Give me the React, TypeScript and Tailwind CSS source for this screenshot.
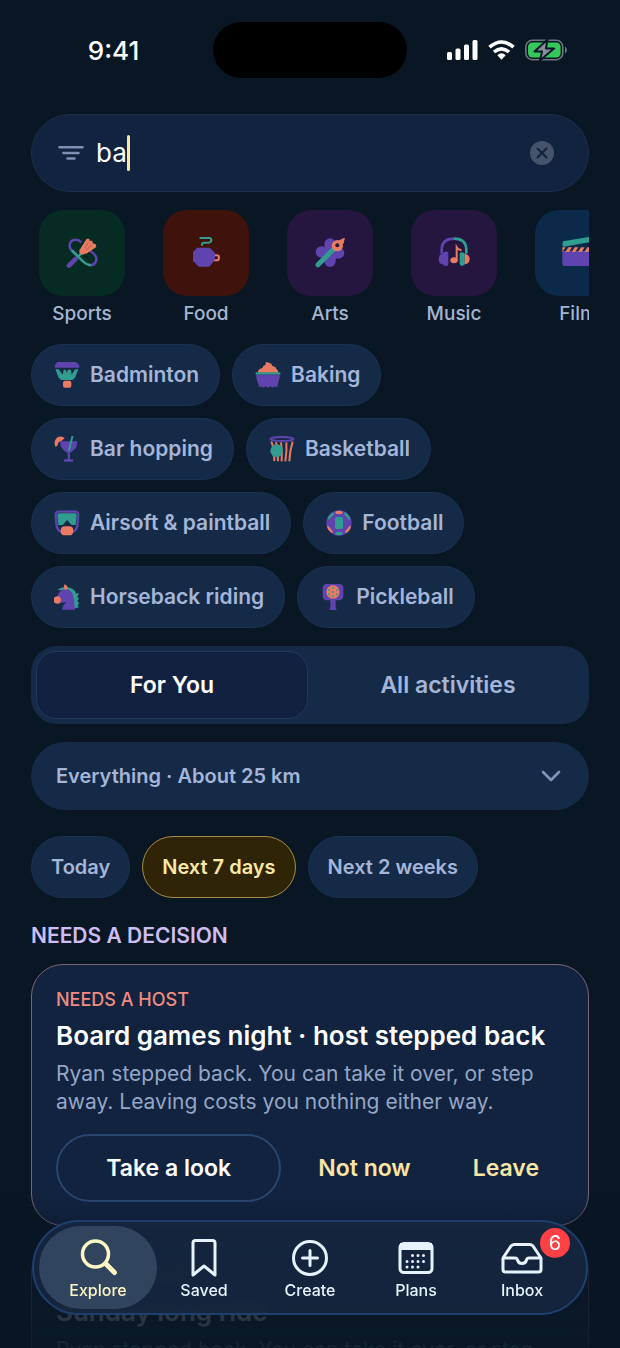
import { useState } from 'react';
import type { ReactNode } from 'react';

const PURPLE = '#5f43ae';
const TEAL = '#309d8f';
const CORAL = '#ea7b63';

const SportsIcon = () => (
  <svg viewBox="0 0 96 96" className="size-8" fill="none" aria-hidden="true">
    <path d="M35 56C22 46 9 36 11 24 14 6 34 3 46 16" stroke={PURPLE} strokeWidth="7.500" />
    <path d="M72 42C87 50 94 62 90 72 87 81 79 86 68 84" stroke={PURPLE} strokeWidth="7.500" />
    <path d="M20 42 50 72Q60 83 72 84" stroke={TEAL} strokeWidth="7.500" strokeLinecap="round" />
    <path d="M48 47 30 66" stroke={TEAL} strokeWidth="7" />
    <path d="M29 66 9 86" stroke={PURPLE} strokeWidth="14" strokeLinecap="round" />
    <path d="M44 34 62 5 70 5 71 11 79 11 80 18 89 22 91 30 60 51Z" fill={CORAL} />
    <circle cx="50" cy="43" r="10" fill={CORAL} />
    <path d="M56 35 68 14M60 39 79 24" stroke="#9d5445" strokeWidth="2" />
  </svg>
);

const FoodIcon = () => (
  <svg viewBox="0 0 96 96" className="size-8" fill="none" aria-hidden="true">
    <path d="M31 3H57Q64 3 64 10 64 17 55 17H42Q36 17 36 24" stroke={TEAL} strokeWidth="6" strokeLinecap="round" />
    <path d="M72 55H80Q87 55 87 62 87 70 79 70H70" stroke={CORAL} strokeWidth="6" />
    <path d="M23 35H58L72 49V67L57 86H27L12 71V46Z" fill={PURPLE} stroke={PURPLE} strokeWidth="6" strokeLinejoin="round" />
  </svg>
);

const ArtsIcon = () => (
  <svg viewBox="0 0 96 96" className="size-8" fill="none" aria-hidden="true">
    <g fill={PURPLE}>
      <circle cx="48" cy="21" r="17" />
      <circle cx="22" cy="45" r="17" />
      <circle cx="74" cy="48" r="17" />
      <circle cx="48" cy="73" r="17" />
      <circle cx="48" cy="48" r="26" />
    </g>
    <path d="M60 35 12 83" stroke={TEAL} strokeWidth="15" strokeLinecap="round" />
    <path d="M76 11 91 4 87 20Z" fill={CORAL} stroke={CORAL} strokeWidth="3" strokeLinejoin="round" />
    <circle cx="70" cy="26" r="17" fill={CORAL} />
    <circle cx="70" cy="25" r="6" fill="#24163f" />
  </svg>
);

const MusicIcon = () => (
  <svg viewBox="0 0 96 96" className="size-8" fill="none" aria-hidden="true">
    <path d="M11 50V40Q11 5 48 5" stroke={PURPLE} strokeWidth="8" />
    <path d="M48 5Q85 5 85 40V50" stroke={TEAL} strokeWidth="8" />
    <path d="M17 46Q31 40 31 49V80Q31 90 20 86L13 82Q2 80 2 66 2 52 14 50Z" fill={PURPLE} />
    <path d="M80 50Q95 53 95 66 95 80 79 82Z" fill={CORAL} />
    <path d="M65 52Q65 44 73 46L80 49V83L73 86Q65 87 65 80Z" fill={TEAL} />
    <ellipse cx="48" cy="70" rx="11" ry="9" fill={CORAL} />
    <path d="M56 70V31Q60 38 68 39" stroke={CORAL} strokeWidth="6" strokeLinecap="round" />
  </svg>
);

const FilmIcon = () => (
  <svg viewBox="0 0 96 96" className="size-8" aria-hidden="true">
    <path d="M3 13 86 -1Q93 -1 93 6V14L6 29Q1 29 1 23Z" fill={TEAL} />
    <path d="M1 42H95V81Q95 87 88 87H8Q1 87 1 80Z" fill={PURPLE} />
    <path
      d="M1 31H11L1 44ZM19 31H30L21 45H10ZM38 31H49L40 45H29ZM57 31H68L59 45H48ZM76 31H87L78 45H67Z"
      fill={CORAL}
    />
  </svg>
);

const BadmintonIcon = () => (
  <svg viewBox="0 0 78 78" className="size-[26px]" fill="none" aria-hidden="true">
    <path d="M10 0H66L76 10V17H3V10Z" fill={PURPLE} />
    <path d="M4 22H14L26 38 29 23H35L38 32 42 23H50L53 38 63 22H73L63 47 55 54H22L14 47Z" fill={TEAL} />
    <rect x="27" y="56" width="25" height="21" rx="6" fill={CORAL} />
  </svg>
);

const BakingIcon = () => (
  <svg viewBox="0 0 78 78" className="size-[26px]" fill="none" aria-hidden="true">
    <path d="M9 32Q8 21 22 18 23 11 32 8 30 3 34 0 52 3 52 12 64 15 64 21 70 24 70 32Z" fill={CORAL} />
    <path d="M2 31H76V38H2Z" fill={TEAL} />
    <path
      d="M4 40 8 37 14 40 20 37 26 40 32 37 38 40 45 37 52 40 58 37 65 40 72 37 75 43 66 76 59 73 53 77 46 73 39 77 32 73 25 77 19 73 13 76 4 48Z"
      fill={PURPLE}
    />
  </svg>
);

const CocktailIcon = () => (
  <svg viewBox="0 0 78 78" className="size-[26px]" fill="none" aria-hidden="true">
    <path d="M3 29Q-2 13 12 3 24-2 32 7L22 15 14 19Q12 28 6 33Z" fill={CORAL} />
    <path d="M18 16H70Q72 37 48 51V70H57V77H30V70H41V51Q18 41 18 16Z" fill={PURPLE} />
    <path d="M45 42 55 2" stroke={TEAL} strokeWidth="6" strokeLinecap="round" />
  </svg>
);

const BasketballIcon = () => (
  <svg viewBox="0 0 78 78" className="size-[26px]" fill="none" aria-hidden="true">
    <path
      d="M7 17Q17 40 16 75M21 19Q28 45 27 76M36 19Q40 45 38 76M52 19Q54 45 49 76M71 17Q62 45 61 76"
      stroke={CORAL}
      strokeWidth="6"
    />
    <ellipse cx="39" cy="9" rx="35" ry="6" stroke={PURPLE} strokeWidth="6" />
    <circle cx="23" cy="44" r="19" fill={TEAL} />
  </svg>
);

const AirsoftIcon = () => (
  <svg viewBox="0 0 78 78" className="size-[26px]" fill="none" aria-hidden="true">
    <path
      d="M15 5H63Q74 5 73 17L70 48Q67 62 54 67H24Q11 62 8 48L5 17Q4 5 15 5Z"
      stroke={PURPLE}
      strokeWidth="7"
    />
    <path d="M16 10H62Q69 10 68 18L65 45H53L39 30 26 45H13L10 18Q9 10 16 10Z" fill={TEAL} />
    <path d="M30 49H48Q58 50 58 62 57 76 46 76H33Q20 76 20 62 20 50 30 49Z" fill={CORAL} />
  </svg>
);

const FootballIcon = () => (
  <svg viewBox="0 0 78 78" className="size-[26px]" fill="none" aria-hidden="true">
    <circle cx="39" cy="39" r="38" fill={PURPLE} />
    <path d="M5 27Q9 13 22 7L24 13 9 29ZM73 27Q69 13 56 7L54 13 69 29Z" fill={TEAL} />
    <path d="M27 72Q39 80 51 72L47 66H31Z" fill={TEAL} />
    <path d="M27 6Q39-1 51 6L47 12H31Z" fill={CORAL} />
    <path d="M3 47 8 49 20 64 20 70Q4 63 3 47ZM75 47 70 49 58 64 58 70Q74 63 75 47Z" fill={CORAL} />
    <rect x="27" y="21" width="24" height="36" rx="5" fill={TEAL} />
  </svg>
);

const HorseIcon = () => (
  <svg viewBox="0 0 78 78" className="size-[26px]" fill="none" aria-hidden="true">
    <path
      d="M10 17 22 11 32 9Q61 9 66 29L75 27 70 38 75 45 70 50 76 59 71 63 75 70 58 74 40 22Z"
      fill={TEAL}
    />
    <path d="M9 37Q16 17 36 14 58 19 60 49L63 77H24Q25 65 36 55L17 57Q7 51 9 37Z" fill={PURPLE} />
    <path d="M31 1Q43 5 41 16L32 18Q28 10 31 1Z" fill={CORAL} />
    <circle cx="10" cy="48" r="11" fill={CORAL} />
  </svg>
);

const PickleballIcon = () => (
  <svg viewBox="0 0 78 78" className="size-[26px]" fill="none" aria-hidden="true">
    <path
      d="M20 0H58Q70 1 70 12V36Q69 48 56 49H47V70L50 78H28L31 70V49H20Q8 48 8 36V12Q8 1 20 0Z"
      fill={PURPLE}
    />
    <circle cx="39" cy="24" r="20" fill={CORAL} />
    <g fill={TEAL}>
      <circle cx="39" cy="12" r="3" />
      <circle cx="27" cy="18" r="3" />
      <circle cx="51" cy="18" r="3" />
      <circle cx="39" cy="24" r="3" />
      <circle cx="27" cy="31" r="3" />
      <circle cx="51" cy="31" r="3" />
      <circle cx="39" cy="37" r="3" />
    </g>
  </svg>
);

const categories = [
  { name: 'Sports', color: 'bg-[#062b23]', icon: <SportsIcon /> },
  { name: 'Food', color: 'bg-[#3f130c]', icon: <FoodIcon /> },
  { name: 'Arts', color: 'bg-[#24163f]', icon: <ArtsIcon /> },
  { name: 'Music', color: 'bg-[#24163f]', icon: <MusicIcon /> },
  { name: 'Film', color: 'bg-[#0b2a4a]', icon: <FilmIcon /> },
];

const suggestions = [
  { name: 'Badminton', icon: <BadmintonIcon /> },
  { name: 'Baking', icon: <BakingIcon /> },
  { name: 'Bar hopping', icon: <CocktailIcon /> },
  { name: 'Basketball', icon: <BasketballIcon /> },
  { name: 'Airsoft & paintball', icon: <AirsoftIcon /> },
  { name: 'Football', icon: <FootballIcon /> },
  { name: 'Horseback riding', icon: <HorseIcon /> },
  { name: 'Pickleball', icon: <PickleballIcon /> },
];

const StatusBar = () => (
  <div className="flex h-14 shrink-0 items-center">
    <div className="flex-1 pl-3.5 text-center text-[26px] font-medium text-white">9:41</div>
    <div className="h-14 w-[194px] rounded-full bg-black" />
    <div className="flex flex-1 items-center justify-center gap-2.5 pr-3.5">
      <svg viewBox="0 0 31 20" className="h-5 w-[31px]" fill="white" aria-hidden="true">
        <rect x="0" y="12" width="5" height="8" rx="1.5" />
        <rect x="8.5" y="8.500" width="5" height="11.5" rx="1.5" />
        <rect x="17" y="4.500" width="5" height="15.5" rx="1.5" />
        <rect x="25.500" y="0" width="5" height="20" rx="1.5" />
      </svg>
      <svg viewBox="0 0 27 20" className="h-5 w-[27px]" fill="none" stroke="white" strokeWidth="3.6" aria-hidden="true">
        <path d="M1.500 7.200Q13.500-3.200 25.500 7.200" />
        <path d="M6 12Q13.500 5.600 21 12" />
        <path d="M9.300 15.200Q13.500 11.500 17.700 15.200L13.500 19.800Z" fill="white" stroke="none" />
      </svg>
      <svg viewBox="0 0 42 22" className="h-[22px] w-[42px]" fill="none" aria-hidden="true">
        <rect x="0.800" y="1.300" width="37" height="19.400" rx="6.500" stroke="#6c747d" strokeWidth="1.600" />
        <path d="M40 7.500Q42 8.500 42 11 42 13.500 40 14.500Z" fill="#6c747d" />
        <rect x="3" y="3.500" width="32.600" height="15" rx="4.500" fill="#34c759" />
        <path
          d="M22.500 0.500 9.500 12.500H17L15 21.500 29 9.500H21Z"
          fill="#858f98"
          stroke="#0a1726"
          strokeWidth="2"
          strokeLinejoin="round"
        />
      </svg>
    </div>
  </div>
);

const SearchBar = () => {
  const [query, setQuery] = useState('ba');

  return (
    <div className="mt-9 flex h-[78px] shrink-0 items-center rounded-full border border-[#1b2e4c] bg-[#12233f] px-[26px]">
      <svg viewBox="0 0 26 16" className="h-4 w-[26px]" stroke="#7c90b4" strokeWidth="2.600" strokeLinecap="round" aria-hidden="true">
        <path d="M1.500 2.300H24.500M5.500 8H20.500M9.500 13.500H16.500" />
      </svg>
      <input
        aria-label="Search activities"
        value={query}
        onChange={(e) => setQuery(e.target.value)}
        className="ml-3 field-sizing-content text-[26px] leading-9 text-white caret-transparent outline-none"
      />
      <span className="h-9 w-[3px] rounded-full bg-[#fbe6a2]" />
      <button aria-label="Clear search" onClick={() => setQuery('')} className="mr-2 ml-auto">
        <svg viewBox="0 0 24 24" className="size-6" aria-hidden="true">
          <circle cx="12" cy="12" r="12" fill="#45536b" />
          <path d="m7.500 7.500 9 9m0-9-9 9" stroke="#12233f" strokeWidth="2" strokeLinecap="round" />
        </svg>
      </button>
    </div>
  );
};

interface DecisionCardProps {
  title: string;
}
const DecisionCard = ({ title }: DecisionCardProps) => (
  <article className="shrink-0 rounded-[32px] border border-[#7d6376] bg-[#11233f] px-6 py-[23px]">
    <p className="text-lg leading-6 font-medium text-[#f08c80]">NEEDS A HOST</p>
    <h3 className="mt-1.5 text-[26px] leading-9 font-semibold whitespace-nowrap text-white">{title}</h3>
    <p className="mt-1.5 text-[21px] leading-7 text-[#95a6c6]">
      Ryan stepped back. You can take it over, or step away. Leaving costs you nothing either way.
    </p>
    <div className="mt-[18px] flex h-[68px] gap-3 text-[23px] font-semibold">
      <button className="flex-1 rounded-full border-2 border-[#294671] text-white">Take a look</button>
      <button className="px-[25px] text-[#f8e5a4]">Not now</button>
      <button className="px-[25px] text-[#f8e5a4]">Leave</button>
    </div>
  </article>
);

interface NavItemProps {
  label: string;
  active?: boolean;
  badge?: number;
  children: ReactNode;
}
const NavItem = ({ label, active, badge, children }: NavItemProps) => (
  <a
    href="#"
    aria-current={active ? 'page' : undefined}
    className={
      'relative -mx-1.5 flex flex-col items-center rounded-full pt-3 text-base leading-6 font-medium' +
      (active ? ' bg-[#3a4e68cc] text-[#fdf5c4]' : ' text-[#e6f3ff]')
    }
  >
    <svg viewBox="0 0 42 40" className="h-10 w-[42px]" fill="none" stroke="currentColor" strokeWidth="3" aria-hidden="true">
      {children}
    </svg>
    {label}
    {badge !== undefined && (
      <span className="absolute top-0.5 right-[11px] flex size-[30px] items-center justify-center rounded-full bg-[#ff4145] text-xl font-normal text-white">
        {badge}
      </span>
    )}
  </a>
);

const BottomNav = () => (
  <nav className="fixed inset-x-8 bottom-[33px] grid h-[95px] grid-cols-5 rounded-full border-2 border-[#1e406f] bg-[#15273fd9] px-[11px] py-1 backdrop-blur-xs">
    <NavItem label="Explore" active>
      <circle cx="18.500" cy="16" r="13" strokeWidth="3.500" />
      <path d="m29 26 8.500 8.500" strokeWidth="5" strokeLinecap="round" />
    </NavItem>
    <NavItem label="Saved">
      <path d="M10 5Q10 2.500 12.500 2.500H29.500Q32 2.500 32 5V37L21 28 10 37Z" strokeLinejoin="round" />
    </NavItem>
    <NavItem label="Create">
      <circle cx="21" cy="20" r="16.500" />
      <path d="M21 12.500V27.500M13.500 20H28.500" strokeLinecap="round" />
    </NavItem>
    <NavItem label="Plans">
      <rect x="5" y="5.500" width="32" height="29" rx="4" />
      <path d="M5 5H37V12H5Z" fill="currentColor" stroke="none" />
      <path
        d="M17.500 17.500H34M12 23.500H34M12 29H28.500"
        strokeDasharray="0 5.500"
        strokeLinecap="round"
      />
    </NavItem>
    <NavItem label="Inbox" badge={6}>
      <path
        d="M2 20 10 8Q11.500 6.500 13.500 6.500H28.500Q30.500 6.500 32 8L40 20V31.500Q40 34 37.500 34H4.500Q2 34 2 31.500V20H14Q16 20 16.500 22 17.500 25.500 21 25.500 24.500 25.500 25.500 22 26 20 28 20H40"
        strokeLinejoin="round"
      />
    </NavItem>
  </nav>
);

const App = () => {
  const [tab, setTab] = useState('For You');
  const [range, setRange] = useState('Next 7 days');

  return (
    <div className="flex h-screen flex-col overflow-hidden bg-[#091624] pt-[22px] font-['Inter','Liberation_Sans',sans-serif]">
      <StatusBar />

      <main className="flex min-h-0 flex-1 flex-col overflow-hidden px-[31px]">
        <SearchBar />

        <div className="mt-[18px] flex shrink-0 gap-[22px] overflow-hidden">
          {categories.map(({ name, color, icon }) => (
            <button
              key={name}
              className="flex w-[102px] shrink-0 flex-col items-center gap-1 text-[19px] leading-7 font-medium text-[#a4b5d2]"
            >
              <span className={'flex size-[86px] items-center justify-center rounded-3xl ' + color}>{icon}</span>
              {name}
            </button>
          ))}
        </div>

        <div className="mt-4 flex shrink-0 flex-wrap gap-3">
          {suggestions.map(({ name, icon }) => (
            <button
              key={name}
              className="flex h-[62px] items-center gap-2.5 rounded-full border border-[#193150] bg-[#152a47] pr-5 pl-[22px] text-[21px] font-semibold text-[#a4b5d8]"
            >
              {icon}
              {name}
            </button>
          ))}
        </div>

        <div className="mt-[18px] grid h-[78px] shrink-0 grid-cols-2 gap-1 rounded-[26px] bg-[#152a47] p-[5px] text-[23px] font-semibold">
          {['For You', 'All activities'].map((name) => (
            <button
              key={name}
              aria-pressed={tab === name}
              onClick={() => setTab(name)}
              className={
                'rounded-[20px] border' +
                (tab === name ? ' border-[#1e3b5e] bg-[#11213f] text-white' : ' border-transparent text-[#a4b5d8]')
              }
            >
              {name}
            </button>
          ))}
        </div>

        <div className="mt-[18px] grid shrink-0 items-center">
          <select
            aria-label="Activity and distance"
            className="col-start-1 row-start-1 h-[68px] appearance-none rounded-full bg-[#152a47] px-[25px] text-xl font-semibold text-[#a4b5d8]"
          >
            <option>Everything · About 25 km</option>
          </select>
          <svg
            viewBox="0 0 20 12"
            className="pointer-events-none col-start-1 row-start-1 mr-7 h-3 w-5 justify-self-end"
            fill="none"
            stroke="#8195ba"
            strokeWidth="2.600"
            strokeLinecap="round"
            strokeLinejoin="round"
            aria-hidden="true"
          >
            <path d="m2 2 8 8 8-8" />
          </svg>
        </div>

        <div className="mt-[26px] flex shrink-0 gap-3">
          {['Today', 'Next 7 days', 'Next 2 weeks'].map((name) => (
            <button
              key={name}
              aria-pressed={range === name}
              onClick={() => setRange(name)}
              className={
                'h-[62px] rounded-full border px-[19px] text-xl font-semibold' +
                (range === name
                  ? ' border-[#a88c43] bg-[#2f2405] text-[#fbe8a6]'
                  : ' border-[#193150] bg-[#152a47] text-[#a4b5d8]')
              }
            >
              {name}
            </button>
          ))}
        </div>

        <h2 className="mt-6 shrink-0 text-[21px] leading-7 font-semibold text-[#cdbdf3]">NEEDS A DECISION</h2>
        <div className="mt-3.5 flex flex-col gap-3.5">
          <DecisionCard title="Board games night · host stepped back" />
          <DecisionCard title="Sunday long ride" />
        </div>
      </main>

      <div className="pointer-events-none fixed inset-x-0 bottom-0 h-[200px] bg-linear-to-b from-[#09162400] from-25% via-[#091624cc] via-60% to-[#091624e6]" />
      <BottomNav />
    </div>
  );
};
export default App;
